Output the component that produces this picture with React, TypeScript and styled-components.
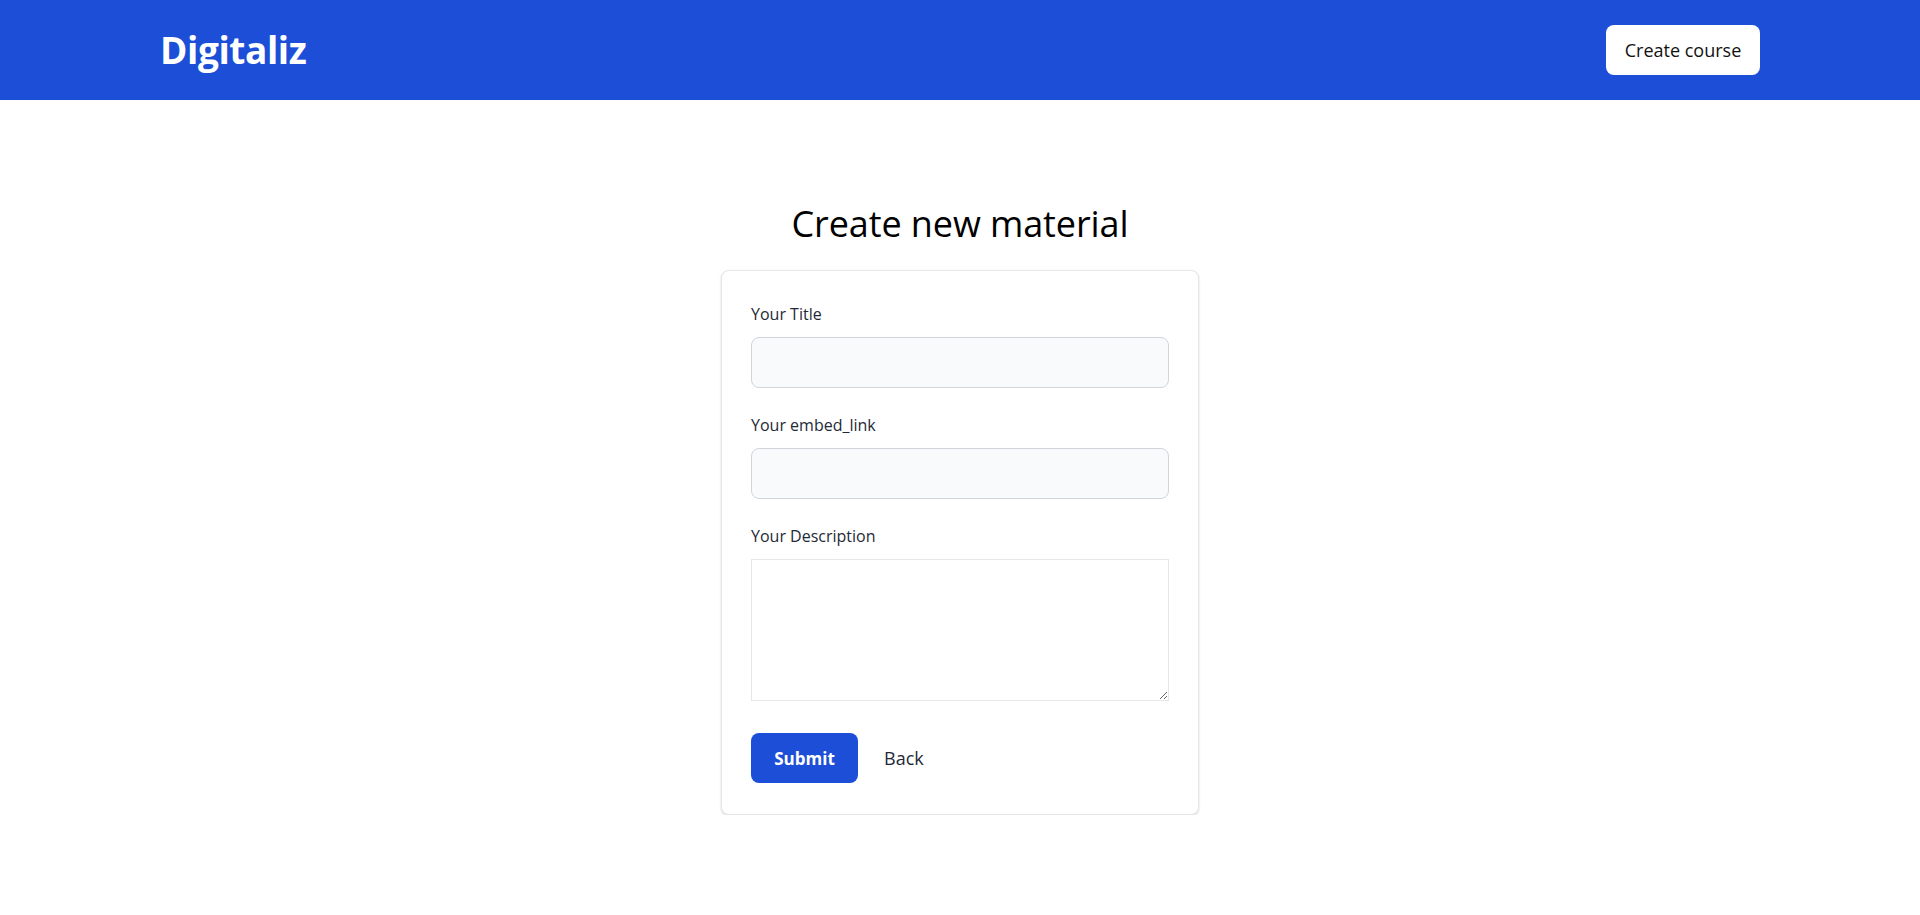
import React from "react";
import styled, { createGlobalStyle } from "styled-components";

const Global = createGlobalStyle`
  * { box-sizing: border-box; }
  html, body { margin: 0; padding: 0; background: #ffffff; }
  body { font-family: "Open Sans", "Noto Sans", Arial, sans-serif; color: #111827; }
`;

const Header = styled.header`
  height: 100px;
  background: #1d4ed8;
  display: flex;
  align-items: center;
  justify-content: space-between;
  padding: 0 160px 0 160px;
`;

const Logo = styled.a`
  color: #ffffff;
  font-size: 37px;
  font-weight: 700;
  letter-spacing: -0.4px;
  text-decoration: none;
  line-height: 1;
  margin-top: -1px;
`;

const HeaderButton = styled.button`
  width: 154px;
  height: 50px;
  background: #ffffff;
  color: #111111;
  border: none;
  border-radius: 8px;
  font-family: inherit;
  font-size: 18px;
  font-weight: 400;
  cursor: pointer;
`;

const Main = styled.main`
  display: flex;
  flex-direction: column;
  align-items: center;
  padding-top: 99px;
`;

const Title = styled.h1`
  margin: 0 0 21px 0;
  font-size: 36px;
  font-weight: 500;
  line-height: 50px;
  color: #000000;
  letter-spacing: -0.1px;
`;

const Card = styled.form`
  width: 478px;
  background: #ffffff;
  border: 1px solid #e5e7eb;
  border-radius: 8px;
  box-shadow: 0 1px 3px rgba(0, 0, 0, 0.1), 0 1px 2px rgba(0, 0, 0, 0.06);
  padding: 31px 29px 31px 29px;
  display: flex;
  flex-direction: column;
`;

const Field = styled.div<{ $gap: number }>`
  display: flex;
  flex-direction: column;
  margin-bottom: ${(p) => p.$gap}px;
`;

const Label = styled.label`
  font-size: 16px;
  line-height: 24px;
  color: #1f2937;
  margin-bottom: 11px;
`;

const Input = styled.input`
  height: 51px;
  width: 100%;
  background: #f9fafb;
  border: 1px solid #d1d5db;
  border-radius: 8px;
  padding: 0 12px;
  font-family: inherit;
  font-size: 15px;
  outline: none;
`;

const TextArea = styled.textarea`
  height: 142px;
  width: 100%;
  border: 1px solid #e5e7eb;
  border-radius: 0;
  background: #ffffff;
  font-family: inherit;
  font-size: 15px;
  outline: none;
  padding: 8px;
  resize: both;
  display: block;
`;

const Actions = styled.div`
  display: flex;
  align-items: center;
  gap: 26px;
`;

const SubmitButton = styled.button`
  width: 107px;
  height: 50px;
  background: #1d4ed8;
  color: #ffffff;
  border: none;
  border-radius: 8px;
  font-family: inherit;
  font-size: 17px;
  font-weight: 700;
  cursor: pointer;
`;

const BackLink = styled.a`
  font-size: 18px;
  color: #1f2937;
  text-decoration: none;
  cursor: pointer;
`;

export default function App() {
  return (
    <>
      <Global />
      <Header>
        <Logo href="#">Digitaliz</Logo>
        <HeaderButton type="button">Create course</HeaderButton>
      </Header>
      <Main>
        <Title>Create new material</Title>
        <Card onSubmit={(e) => e.preventDefault()}>
          <Field $gap={25}>
            <Label htmlFor="title">Your Title</Label>
            <Input id="title" type="text" />
          </Field>
          <Field $gap={25}>
            <Label htmlFor="embed">Your embed_link</Label>
            <Input id="embed" type="text" />
          </Field>
          <Field $gap={32}>
            <Label htmlFor="desc">Your Description</Label>
            <TextArea id="desc" />
          </Field>
          <Actions>
            <SubmitButton type="submit">Submit</SubmitButton>
            <BackLink href="#">Back</BackLink>
          </Actions>
        </Card>
      </Main>
    </>
  );
}
